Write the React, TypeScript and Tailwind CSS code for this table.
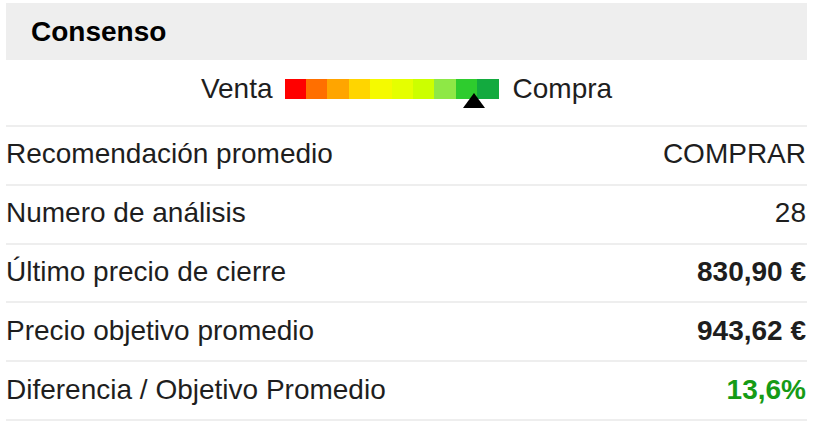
const segments = [
  "bg-[#ff0000]",
  "bg-[#ff6f00]",
  "bg-[#ffa500]",
  "bg-[#ffd500]",
  "bg-[#f5fa00]",
  "bg-[#e5ff00]",
  "bg-[#ccff00]",
  "bg-[#8ee846]",
  "bg-[#2ecc2e]",
  "bg-[#13aa3f]",
];

const rows = [
  { label: "Recomendación promedio", value: "COMPRAR", className: "" },
  { label: "Numero de análisis", value: "28", className: "" },
  { label: "Último precio de cierre", value: "830,90 €", className: "font-bold" },
  { label: "Precio objetivo promedio", value: "943,62 €", className: "font-bold" },
  { label: "Diferencia / Objetivo Promedio", value: "13,6%", className: "font-bold text-[#169b16]" },
];

const App = () => {
  return (
    <div className="w-[818px] h-[429px] bg-white pt-[3px] px-[6px] font-['Liberation_Sans',Arial,sans-serif] text-[#1e1e1e]">
      <div className="w-[801px]">
        <div className="h-[57px] bg-[#eeeeee] flex items-center pl-[25px]">
          <span className="text-[28px] leading-none font-bold text-black">Consenso</span>
        </div>
        <div className="h-[67px] pb-[7px] flex items-center justify-center gap-[12px] border-b-2 border-[#eeeeee]">
          <span className="text-[28px] leading-none">Venta</span>
          <div className="relative w-[214px] h-[20px] flex">
            {segments.map((c) => (
              <div key={c} className={`flex-1 h-full ${c}`} />
            ))}
            <svg className="absolute left-[178px] top-[14px]" width="22" height="15" viewBox="0 0 22 15">
              <polygon points="11,0 22,15 0,15" fill="#000" />
            </svg>
          </div>
          <span className="text-[28px] leading-none ml-[2px]">Compra</span>
        </div>
        {rows.map((r) => (
          <div
            key={r.label}
            className="h-[58.8px] pb-[2px] flex items-center justify-between border-b-2 border-[#eeeeee] pr-[1px]"
          >
            <span className="text-[28px] leading-none">{r.label}</span>
            <span className={`text-[28px] leading-none ${r.className}`}>{r.value}</span>
          </div>
        ))}
      </div>
    </div>
  );
};

export default App;
